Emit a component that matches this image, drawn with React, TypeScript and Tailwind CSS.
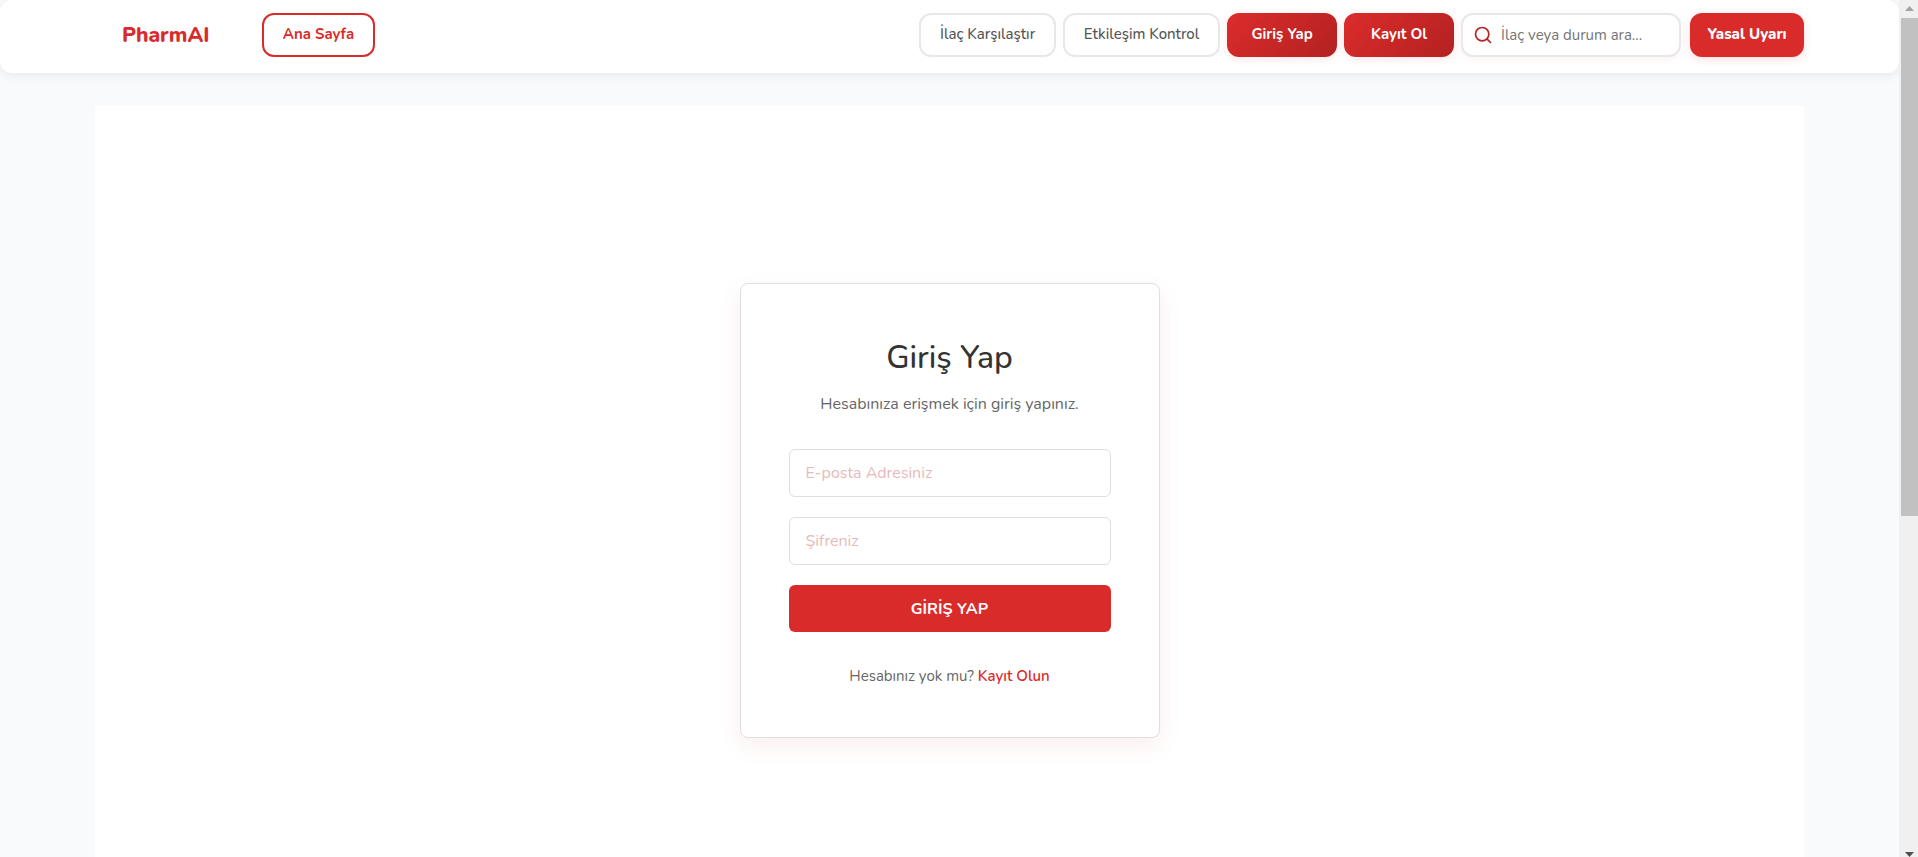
import { Search } from "lucide-react";

const outlined =
  "flex h-11 items-center justify-center whitespace-nowrap rounded-xl border-2 pb-0.5 text-[15px]";
const gradient =
  "flex h-11 w-[110px] items-center justify-center whitespace-nowrap rounded-xl bg-linear-135 from-[#dc2c2c] to-[#b32121] pb-0.5 text-[15px] font-bold text-white shadow-[0_2px_8px_rgba(218,43,43,0.12)]";
const field =
  "h-12 w-full rounded-md border border-[#dedfe1] bg-white px-4 text-base text-[#333333] outline-none placeholder:text-[#e8b9b9]";

function Header() {
  return (
    <header className="rounded-xl bg-white px-[5%] shadow-[0_2px_12px_rgba(0,0,0,0.08)]">
      <nav className="flex items-center justify-between pt-[13px] pb-4">
        <div className="flex items-center pl-[27px]">
          <a href="#" className="w-[140px] pt-0.5 text-[21px] font-extrabold text-[#da2b2b]">
            PharmAI
          </a>
          <a href="#" className={`${outlined} w-[113px] border-[#da2b2b] font-bold text-[#da2b2b]`}>
            Ana Sayfa
          </a>
        </div>
        <div className="flex items-center gap-[7px]">
          <a href="#" className={`${outlined} w-[137px] border-[#e8e8e8] font-medium text-[#555555]`}>
            İlaç Karşılaştır
          </a>
          <a href="#" className={`${outlined} w-[157px] border-[#e8e8e8] font-medium text-[#555555]`}>
            Etkileşim Kontrol
          </a>
          <a href="#" className={gradient}>
            Giriş Yap
          </a>
          <a href="#" className={gradient}>
            Kayıt Ol
          </a>
          <label className="mr-0.5 flex h-11 w-[220px] items-center gap-2 rounded-xl border-2 border-[#e8e8e8] bg-white px-2.5 shadow-[0_2px_8px_rgba(218,43,43,0.06)]">
            <Search className="size-5 shrink-0 text-[#b72323]" strokeWidth={2} />
            <input
              type="search"
              aria-label="İlaç veya durum ara"
              placeholder="İlaç veya durum ara..."
              className="w-full min-w-0 bg-transparent text-[15px] outline-none placeholder:text-[#757575]"
            />
          </label>
          <button
            type="button"
            className="h-11 w-[114px] whitespace-nowrap rounded-xl bg-[#da2b2b] pb-0.5 text-[15px] font-extrabold text-white shadow-[0_2px_8px_rgba(218,43,43,0.16)]"
          >
            Yasal Uyarı
          </button>
        </div>
      </nav>
    </header>
  );
}

function LoginCard() {
  return (
    <section className="w-full max-w-[420px] rounded-lg border border-[#dedfe1] bg-white p-12 text-center shadow-[0_8px_24px_rgba(218,43,43,0.08)]">
      <h1 className="pt-0.5 text-[32px] leading-12 font-medium text-[#333333]">Giriş Yap</h1>
      <p className="mt-2.5 text-base leading-6 text-[#666666]">Hesabınıza erişmek için giriş yapınız.</p>
      <form className="mt-[33px] flex flex-col gap-5">
        <input type="email" aria-label="E-posta Adresiniz" placeholder="E-posta Adresiniz" className={field} />
        <input type="password" aria-label="Şifreniz" placeholder="Şifreniz" className={field} />
        <button type="button" className="h-[47px] rounded-md bg-[#da2b2b] text-base font-bold text-white">
          GİRİŞ YAP
        </button>
      </form>
      <p className="mt-8 mb-px text-[15px] leading-6 text-[#666666]">
        Hesabınız yok mu?{" "}
        <a href="#" className="font-semibold text-[#da2b2b]">
          Kayıt Olun
        </a>
      </p>
    </section>
  );
}

function ScrollRail() {
  return (
    <div aria-hidden="true" className="flex w-[19px] shrink-0 flex-col justify-between bg-[#f0f0f0] pl-0.5">
      <div className="flex h-[60.2%] flex-col">
        <svg viewBox="0 0 17 18" className="h-[18px] w-[17px] shrink-0">
          <path d="M4 11h9L8.500 6z" fill="#a3a3a3" />
        </svg>
        <div className="flex-1 bg-[#c1c1c1]" />
      </div>
      <svg viewBox="0 0 17 6" className="h-[6px] w-[17px] shrink-0">
        <path d="M4 1h9L8.500 6z" fill="#505050" />
      </svg>
    </div>
  );
}

export default function App() {
  return (
    <div className="flex h-screen overflow-hidden bg-[#f8fafc] font-['Nunito','Noto_Sans',sans-serif]">
      <div className="min-w-0 flex-1 overflow-hidden">
        <Header />
        <main className="mx-[5%] mt-[33px] flex justify-center bg-white py-[177px]">
          <LoginCard />
        </main>
      </div>
      <ScrollRail />
    </div>
  );
}
